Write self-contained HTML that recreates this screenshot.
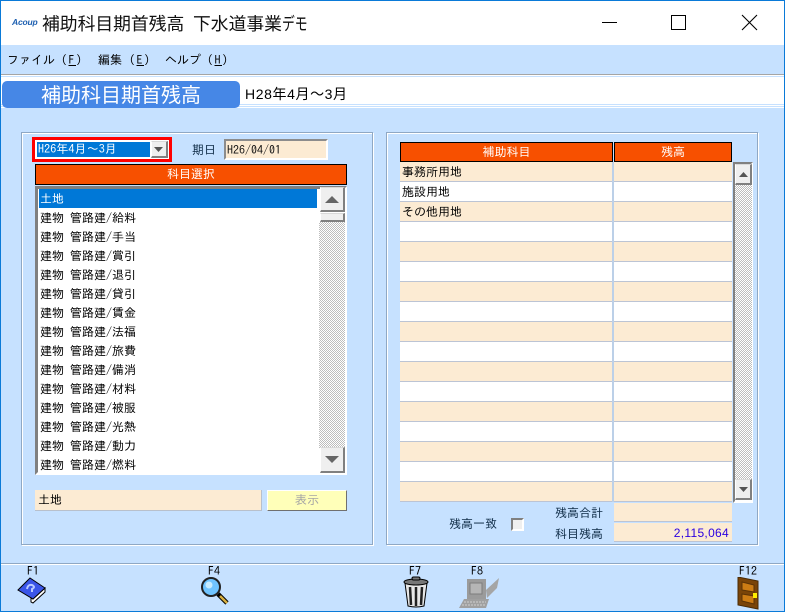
<!DOCTYPE html>
<html lang="ja"><head><meta charset="utf-8"><style>
html,body{margin:0;padding:0}
body{width:785px;height:612px;position:relative;overflow:hidden;background:#c6e1ff;font-family:"WenQuanYi Zen Hei","IPAGothic","Noto Sans CJK JP",sans-serif;font-size:12px;color:#000}
div,span.a,svg{position:absolute;box-sizing:border-box}
.t{white-space:pre;line-height:16px}
.ns{font-family:"Liberation Sans","Noto Sans CJK JP",sans-serif}
.or{background:#f75000;border:1px solid #000;color:#fff;text-align:center;line-height:18px}
.chk{background:repeating-conic-gradient(#bdbdbd 0 25%,#fff 0 50%) 0 0/2px 2px}
.btn{background:#efefef;border-style:solid;border-width:1px 2px 2px 1px;border-color:#d8d8d8 #808080 #808080 #fff}
</style></head><body>
<!-- title -->
<div style="left:0;top:0;width:785px;height:45px;background:#fff"></div>
<div class="t" style="left:12px;top:16px;font:italic bold 8.500px/12px 'Liberation Sans',sans-serif;letter-spacing:-.2px;color:#1d5fb0">Acoup</div>
<div class="t ns" style="left:42px;top:12px;font-size:17.8px;line-height:24px;color:#111">補助科目期首残高</div>
<div class="t ns" style="left:193px;top:12px;font-size:17.8px;line-height:24px;color:#111">下水道事業</div>
<div class="t ns" style="left:282px;top:12px;font-size:17.8px;line-height:24px;color:#111;transform:scaleX(.72);transform-origin:0 0">デモ</div>
<svg style="left:600px;top:0" width="185" height="45" fill="none" stroke="#000"><path d="M2 22.5H17" stroke-width="1"/><rect x="71.5" y="15.5" width="14" height="14"/><path d="M142 15L157 30M157 15L142 30" stroke-width="1.1"/></svg>
<!-- menu -->
<div class="t" style="left:7px;top:52px">ファイル</div><div class="t" style="left:61px;top:52px;letter-spacing:1.5px">(<u>F</u>)</div>
<div class="t" style="left:98px;top:52px">編集</div><div class="t" style="left:129px;top:52px;letter-spacing:1.5px">(<u>E</u>)</div>
<div class="t" style="left:165px;top:52px">ヘルプ</div><div class="t" style="left:207px;top:52px;letter-spacing:1.5px">(<u>H</u>)</div>
<div style="left:0;top:74px;width:785px;height:1px;background:#a5a5a5"></div>
<div style="left:0;top:75px;width:785px;height:1px;background:#fff"></div>
<div style="left:0;top:76px;width:785px;height:1px;background:#c6e1ff"></div>
<div style="left:0;top:77px;width:785px;height:27px;background:#fff"></div>
<div style="left:0;top:105px;width:785px;height:1px;background:#fff"></div>
<div style="left:0;top:107px;width:785px;height:1px;background:#fff"></div>
<div style="left:2px;top:81px;width:238px;height:27px;background:#4687e6;border-radius:5px;color:#fff;text-align:center;font-size:20px;line-height:30px;font-family:'Liberation Sans','Noto Sans CJK JP',sans-serif">補助科目期首残高</div>
<div class="t ns" style="left:245px;top:85px;font-size:14px;line-height:18px;letter-spacing:.6px">H28年4月～3月</div>
<!-- left panel -->
<div style="left:21px;top:132px;width:352px;height:413px;border:1px solid #8fa8c4;box-shadow:inset 1px 1px 0 #fff,1px 1px 0 #fff"></div>
<div style="left:32px;top:137px;width:140px;height:25px;border:3px solid #f00;background:#fff"></div>
<div class="t" style="left:37px;top:142px;width:113px;height:15px;background:#0078d7;color:#fff;padding-left:1px;line-height:15px;letter-spacing:.1px">H26年4月～3月</div>
<div class="btn" style="left:151px;top:141px;width:17px;height:17px"></div>
<svg style="left:154px;top:147px" width="10" height="5"><path d="M0 0H9L4.500 5Z" fill="#555"/></svg>
<div class="t" style="left:192px;top:142px;color:#0d2a45">期日</div>
<div class="t" style="left:224px;top:139px;width:104px;height:21px;background:#fcebd3;border:2px solid;border-color:#8c8c8c #fff #fff #8c8c8c;padding-left:1px;line-height:19px;color:#111">H26/04/01</div>
<div class="or" style="left:35px;top:164px;width:312px;height:21px">科目選択</div>
<div style="left:35px;top:186px;width:312px;height:289px;background:#fff;border:3px solid;border-color:#808080 #fff #fff #808080"></div>
<div class="t" style="left:39px;top:189px;width:278px;height:19px;background:#0078d7;color:#fff;padding-left:1px;line-height:20px">土地</div>
<div class="t" style="left:40px;top:209px;line-height:19px;width:270px">建物 管路建/給料
建物 管路建/手当
建物 管路建/賞引
建物 管路建/退引
建物 管路建/貸引
建物 管路建/賃金
建物 管路建/法福
建物 管路建/旅費
建物 管路建/備消
建物 管路建/材料
建物 管路建/被服
建物 管路建/光熱
建物 管路建/動力
建物 管路建/燃料</div>
<div class="chk" style="left:319px;top:222px;width:26px;height:226px"></div>
<div class="btn" style="left:320px;top:187px;width:25px;height:25px"></div>
<svg style="left:324px;top:196px" width="16" height="8"><path d="M8 0L15 7H1Z" fill="#666"/></svg>
<div class="btn" style="left:320px;top:213px;width:25px;height:9px"></div>
<div class="btn" style="left:320px;top:447px;width:25px;height:26px"></div>
<svg style="left:324px;top:456px" width="16" height="8"><path d="M1 0H15L8 7Z" fill="#666"/></svg>
<div class="t" style="left:35px;top:490px;width:227px;height:21px;background:#fcebd3;border-bottom:1px solid #b8c0cc;border-right:1px solid #b8c0cc;padding-left:3px;line-height:20px">土地</div>
<div class="t" style="left:267px;top:490px;width:80px;height:21px;background:#ffffb9;border:1px solid;border-color:#fff #707070 #707070 #fff;text-align:center;color:#a5a5a5;line-height:19px">表示</div>
<!-- right panel -->
<div style="left:386px;top:132px;width:372px;height:413px;border:1px solid #8fa8c4;box-shadow:inset 1px 1px 0 #fff,1px 1px 0 #fff"></div>
<div class="or" style="left:400px;top:142px;width:213px;height:20px">補助科目</div>
<div class="or" style="left:614px;top:142px;width:118px;height:20px">残高</div>
<div id="rows" style="left:400px;top:162px;width:332px;height:340px;background:repeating-linear-gradient(#fcebd3 0 19px,#bcc4d4 19px 20px,#fff 20px 39px,#bcc4d4 39px 40px)"></div>
<div style="left:612px;top:162px;width:2px;height:340px;background:#bcd0e8"></div>
<div class="t" style="left:402px;top:162px;line-height:20px">事務所用地
施設用地
その他用地</div>
<div style="left:733px;top:162px;width:20px;height:341px;background:#fff;border:2px solid;border-color:#808080 #fff #fff #808080"></div>
<div class="chk" style="left:735px;top:185px;width:17px;height:294px"></div>
<div class="btn" style="left:735px;top:164px;width:17px;height:21px"></div>
<svg style="left:739px;top:172px" width="9" height="5"><path d="M4.500 0L9 5H0Z" fill="#555"/></svg>
<div class="btn" style="left:735px;top:479px;width:17px;height:21px"></div>
<svg style="left:739px;top:487px" width="9" height="5"><path d="M0 0H9L4.500 5Z" fill="#555"/></svg>
<div style="left:614px;top:503px;width:118px;height:19px;background:#fcebd3;border-bottom:1px solid #bcc4d4"></div>
<div class="t" style="left:614px;top:523px;width:118px;height:19px;background:#fcebd3;border-bottom:1px solid #bcc4d4;text-align:right;padding-right:3px;color:#2a00e0;line-height:20px;font-size:12px;font-family:'Liberation Sans',sans-serif;letter-spacing:.3px">2,115,064</div>
<div class="t" style="left:555px;top:505px;color:#0d2a45">残高合計</div>
<div class="t" style="left:555px;top:526px;color:#0d2a45">科目残高</div>
<div class="t" style="left:449px;top:516px;color:#0d2a45">残高一致</div>
<div style="left:511px;top:518px;width:13px;height:13px;background:#efefef;border:2px solid;border-color:#808080 #fff #fff #808080"></div>
<!-- footer -->
<div style="left:0;top:563px;width:785px;height:1px;background:#8fa8c4"></div>
<div style="left:0;top:564px;width:785px;height:1px;background:#fff"></div>
<div class="t" style="left:27px;top:564px;line-height:14px">F1</div>
<div class="t" style="left:208px;top:564px;line-height:14px">F4</div>
<div class="t" style="left:409px;top:564px;line-height:14px">F7</div>
<div class="t" style="left:471px;top:564px;line-height:14px">F8</div>
<div class="t" style="left:739px;top:564px;line-height:14px">F12</div>
<!-- F1 book -->
<svg style="left:17px;top:577px" width="30" height="28"><path d="M16 22L28 11V15L16 26L14 25V21Z" fill="#fff" stroke="#000"/><path d="M1 13L13 1L28 11L16 22Z" fill="#3a55e8" stroke="#000"/><path d="M10 12Q11 7 15 8Q19 10 15 12L15 15" fill="none" stroke="#b8c8ff" stroke-width="2"/></svg>
<!-- F4 magnifier -->
<svg style="left:200px;top:577px" width="30" height="28"><path d="M18 17L27 26" stroke="#000" stroke-width="4.500"/><path d="M20 19L27 26" stroke="#d8b040" stroke-width="2.500"/><circle cx="11" cy="10" r="9" fill="#70c4ff" stroke="#222" stroke-width="2"/><circle cx="9" cy="8" r="3.500" fill="#c8ecff"/></svg>
<!-- F7 trash -->
<svg style="left:402px;top:576px" width="28" height="32"><path d="M3 7H25L22 30Q14 32 6 30Z" fill="#e8e8e8" stroke="#000"/><path d="M8 11L9 29M14 11V30M20 11L19 29" stroke="#222" stroke-width="2.500"/><ellipse cx="14" cy="6" rx="12" ry="3" fill="#777" stroke="#000"/><rect x="10" y="1" width="8" height="3" rx="1.500" fill="#777" stroke="#000"/></svg>
<!-- F8 pc -->
<svg style="left:459px;top:576px" width="42" height="33"><path d="M8 3H27V23H8Z" fill="#9b9b9b"/><rect x="11" y="7" width="12" height="11" fill="#b5b5b5" stroke="#7d7d7d"/><path d="M27 14L40 2L38 12L28 22Z" fill="#a5a5a5"/><path d="M5 23H30L27 32H0Z" fill="#a0a0a0"/><path d="M5 26H27M3 29H26" stroke="#cfcfcf" stroke-dasharray="2 1"/></svg>
<!-- F12 door -->
<svg style="left:737px;top:577px" width="25" height="33"><path d="M1 0L21 4V32L1 28Z" fill="#7a4408" stroke="#4a2a04"/><path d="M5 5L17 8V15L5 13ZM5 17L17 19V27L5 24Z" fill="#cc7c14" stroke="#5a3206"/><rect x="16" y="16" width="4" height="5" fill="#ffee00"/></svg>
<!-- window border -->
<div style="left:0;top:0;width:785px;height:612px;border:1px solid #0a7ad8;pointer-events:none"></div>
</body></html>
